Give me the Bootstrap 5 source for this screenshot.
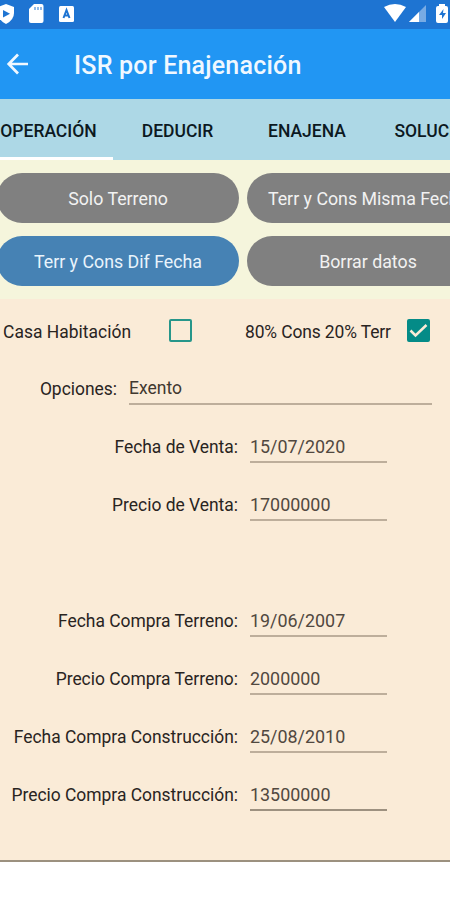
<!DOCTYPE html>
<html lang="es">
<head>
<meta charset="utf-8">
<meta name="viewport" content="width=device-width, initial-scale=1">
<title>ISR por Enajenación</title>
<link rel="stylesheet" href="https://cdn.jsdelivr.net/npm/bootstrap@5.3.0/dist/css/bootstrap.min.css">
<style>
body{font-family:Roboto,sans-serif;font-size:17.45px;line-height:24px;color:#29241f;background:#fff;overflow:hidden}
.status-bar{height:29px;background:#1e74d2}
.app-bar{height:70px;background:#2196f3;padding:3px 0 0 5px}
.app-bar svg{margin-top:-4px}
.app-title{font-size:25px;font-weight:500;line-height:32px;margin-left:44px;color:#f0f8ff;letter-spacing:.21px}
.tab-strip{height:61px;margin-left:-16px;background:#add8e6;overflow:hidden}
.tab-strip .nav-link{width:129px;height:61px;padding:20px 0 0;color:#0c191f;font-size:17.5px;font-weight:500;text-align:center;border-radius:0;border-bottom:3px solid transparent}
.tab-strip .nav-link.active{border-bottom-color:#fff}
.tab-strip .nav-link:nth-child(3){padding-left:1px}
.tab-strip .nav-link:last-child{padding-left:2px}
.actions{height:139px;padding:13px 0 0;margin-left:-3px;background:#f5f5dc;display:grid;grid-template-columns:242px 242px;gap:13px 8px;align-content:start;overflow:hidden}
.actions .btn{height:50px;padding:2px 0 0;font-size:17.8px;line-height:24px;color:#f2f2f2;background:#808080;border:0}
.actions .btn.chosen{background:#4682b4;color:#e9f4fc}
.form-panel{height:563px;background:#faebd7;border-bottom:2px solid #9c917f}
.checks{height:64px;padding-left:3px;margin-bottom:10px}
.checks label{padding-top:1px}
.tick{width:23px;height:23px;margin:0;border:2.5px solid #26968a;background-color:transparent;box-shadow:none}
.form-check-input.tick[type=checkbox]{border-radius:2px}
.tick:checked{background-color:#048b87;border-color:#048b87;background-image:none}
.tick-wrap{position:relative;width:23px;height:23px}
.checks>.tick,.tick-wrap{margin-top:-1px}
.tick-wrap .tick{display:block}
.tick-wrap svg{position:absolute;left:0;top:0}
.w-casa{width:166px;letter-spacing:.03px}
.w-cons{width:167px;padding-left:5px;letter-spacing:-.12px}
.field-row{height:58px}
.field-row .caption{width:238px;text-align:right;padding-top:4px;white-space:nowrap;letter-spacing:-.01px}
.field-row .entry{width:137px;height:32px;margin-left:12px;padding:0;border:0;border-bottom:2px solid #bdae9b;border-radius:0;background:transparent;font-size:17.9px;line-height:24px;color:#51483f;box-shadow:none}
.field-row.opt .caption{width:117px}
.field-row.opt .entry{width:303px;color:#40382f;font-size:17.5px}
.field-row.last .entry{border-color:#9d9180}
.gap-row{height:58px}
</style>
</head>
<body>
<div class="status-bar">
<svg width="450" height="29" class="d-block">
<g fill="#fff">
<path d="M6 4l8 3v6q0 7-8 11q-8-4-8-11V7z"/>
<path d="M34 4h7.500q2 0 2 2v15q0 2-2 2H31q-2 0-2-2V9z"/>
<rect x="59" y="6" width="15" height="16" rx="1.500"/>
<path d="M384 7q11-6 22 0L395 22z"/>
<path d="M409 22L426 5V22z" opacity=".4"/><path d="M409 22L419 12V22z"/>
<path d="M439 4h6v2h1q2 0 2 2v13q0 2-2 2h-8q-2 0-2-2V8q0-2 2-2h1z"/>
</g>
<path d="M3 10l7 3.800L3 17.500z" fill="#1e74d2"/>
<path d="M35 7v3M38 7v3M41 7v3" stroke="#6ca5e3" stroke-width="1.500"/>
<path d="M63.500 18L66.500 10l3 8M64.500 15.500h4" stroke="#1e74d2" stroke-width="2" fill="none"/>
<path d="M443.500 9l-4.500 6h3v4l4-6h-3z" fill="#1e74d2"/>
</svg>
</div>
<header class="app-bar d-flex align-items-center">
<svg width="25" height="24" viewBox="0 0 25 24" fill="none" stroke="#f0f8ff" stroke-width="2.700"><path d="M23 12H4M13 2.500L3.700 12L13 21.500"/></svg>
<h1 class="app-title mb-0">ISR por Enajenación</h1>
</header>
<nav class="nav tab-strip flex-nowrap">
<a class="nav-link active flex-shrink-0" href="#">OPERACIÓN</a>
<a class="nav-link flex-shrink-0" href="#">DEDUCIR</a>
<a class="nav-link flex-shrink-0" href="#">ENAJENA</a>
<a class="nav-link flex-shrink-0" href="#">SOLUCION</a>
</nav>
<section class="actions">
<button class="btn rounded-pill">Solo Terreno</button>
<button class="btn rounded-pill">Terr y Cons Misma Fecha</button>
<button class="btn rounded-pill chosen">Terr y Cons Dif Fecha</button>
<button class="btn rounded-pill">Borrar datos</button>
</section>
<main class="form-panel">
<div class="checks d-flex align-items-center">
<label class="w-casa" for="casa">Casa Habitación</label>
<input class="form-check-input tick" type="checkbox" id="casa">
<label class="w-cons ms-5" for="cons">80% Cons 20% Terr</label>
<div class="tick-wrap"><input class="form-check-input tick" type="checkbox" id="cons" checked><svg width="24" height="24" fill="none" stroke="#faebd7" stroke-width="2.500"><path d="M3.500 11.500l5 5L19.500 6"/></svg></div>
</div>
<div class="field-row opt d-flex"><label class="caption" for="f0">Opciones:</label><input class="form-control entry" id="f0" value="Exento"></div>
<div class="field-row d-flex"><label class="caption" for="f1">Fecha de Venta:</label><input class="form-control entry" id="f1" value="15/07/2020"></div>
<div class="field-row d-flex"><label class="caption" for="f2">Precio de Venta:</label><input class="form-control entry" id="f2" value="17000000"></div>
<div class="gap-row"></div>
<div class="field-row d-flex"><label class="caption" for="f3">Fecha Compra Terreno:</label><input class="form-control entry" id="f3" value="19/06/2007"></div>
<div class="field-row d-flex"><label class="caption" for="f4">Precio Compra Terreno:</label><input class="form-control entry" id="f4" value="2000000"></div>
<div class="field-row d-flex"><label class="caption" for="f5">Fecha Compra Construcción:</label><input class="form-control entry" id="f5" value="25/08/2010"></div>
<div class="field-row last d-flex"><label class="caption" for="f6">Precio Compra Construcción:</label><input class="form-control entry" id="f6" value="13500000"></div>
</main>
<script src="https://cdn.jsdelivr.net/npm/bootstrap@5.3.0/dist/js/bootstrap.bundle.min.js"></script>
</body>
</html>
